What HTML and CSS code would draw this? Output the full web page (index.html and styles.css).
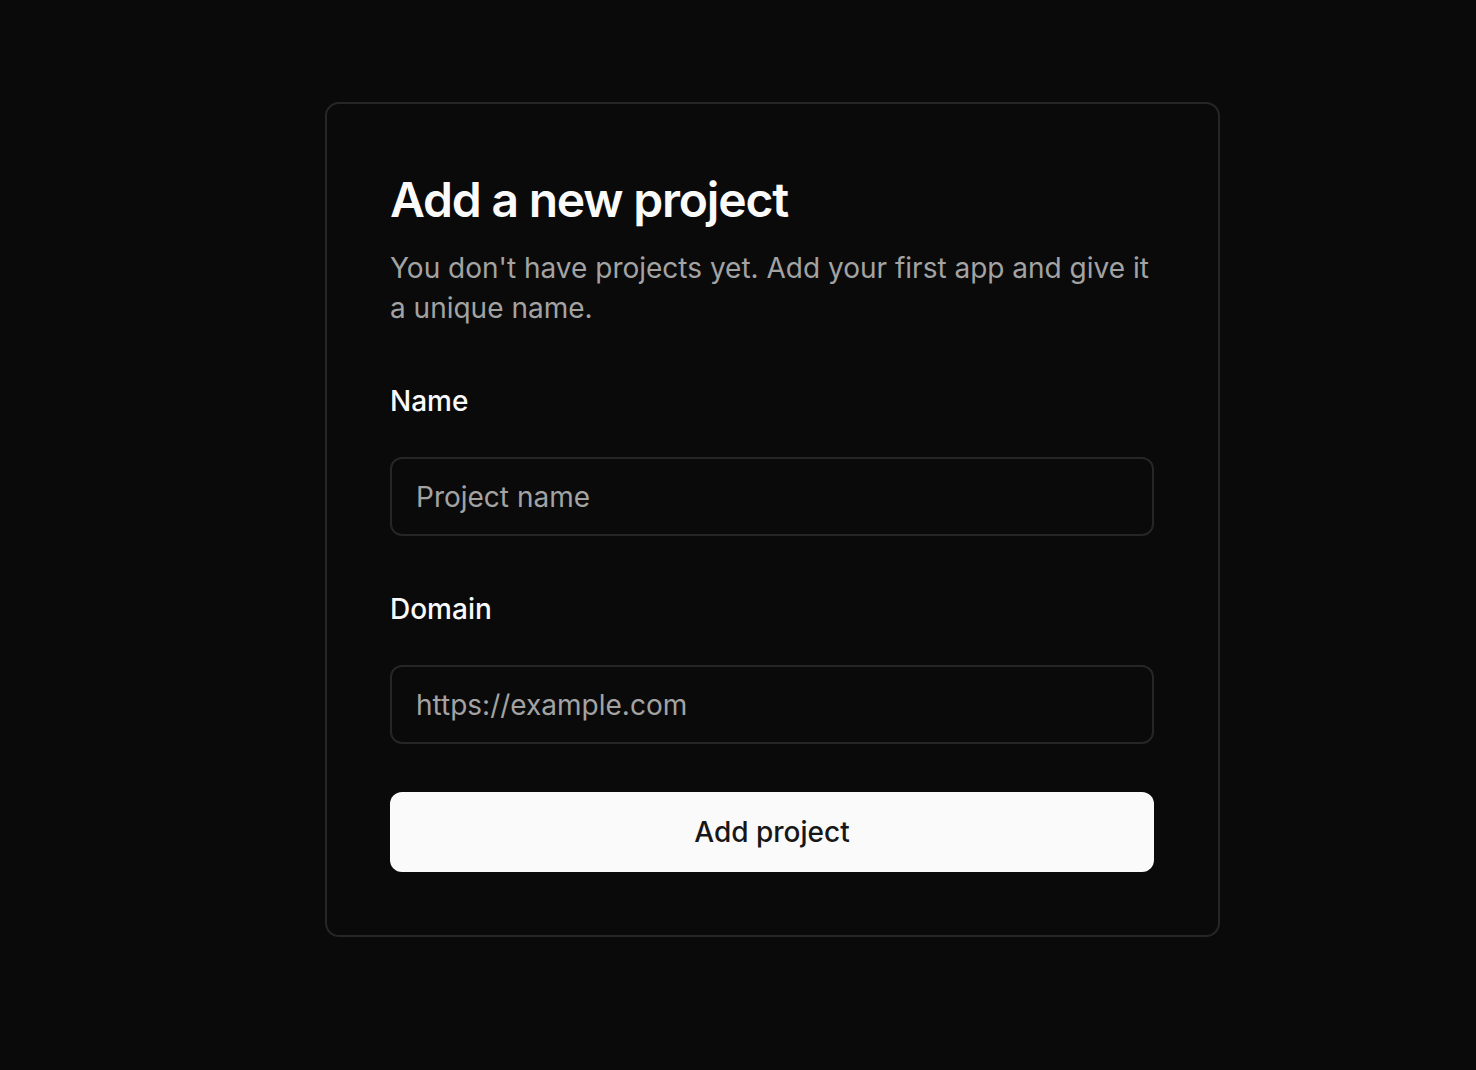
FILE: index.html
```html
<!DOCTYPE html>
<html lang="en">
<head>
<meta charset="utf-8">
<title>Add a new project</title>
<link rel="stylesheet" href="styles.css">
</head>
<body>
  <main class="card">
    <h1 class="title">Add a new project</h1>
    <p class="desc">You don't have projects yet. Add your first app and give it a unique name.</p>
    <form class="form">
      <div class="field">
        <label class="label" for="name">Name</label>
        <input class="input" id="name" type="text" placeholder="Project name">
      </div>
      <div class="field">
        <label class="label" for="domain">Domain</label>
        <input class="input" id="domain" type="text" placeholder="https://example.com">
      </div>
      <button class="button" type="button">Add project</button>
    </form>
  </main>
</body>
</html>
```

FILE: styles.css
```css
* { box-sizing: border-box; }

html, body {
  margin: 0;
  background: #0a0a0a;
}

body {
  padding: 102px 0 0 325px;
  font-family: Inter, "Noto Sans", sans-serif;
  color: #fafafa;
  min-height: 1070px;
}

.card {
  width: 895px;
  border: 2px solid #262626;
  border-radius: 14px;
  padding: 64px 64px 63px 63px;
  background: #0a0a0a;
}

.title {
  margin: 0;
  font-size: 48px;
  line-height: 64px;
  font-weight: 600;
  letter-spacing: -0.025em;
  color: #fafafa;
}

.desc {
  margin: 16px 0 0;
  font-size: 28px;
  line-height: 40px;
  color: #a3a3a3;
}

.form {
  margin-top: 59px;
  display: flex;
  flex-direction: column;
}

.field {
  display: flex;
  flex-direction: column;
  gap: 42px;
  margin-bottom: 59px;
}

.field + .field { margin-bottom: 48px; }

.label {
  font-size: 28px;
  line-height: 28px;
  font-weight: 500;
  color: #fafafa;
}

.input {
  height: 79px;
  width: 100%;
  border: 2px solid #262626;
  border-radius: 12px;
  background: #0a0a0a;
  padding: 0 24px;
  font-family: inherit;
  font-size: 28px;
  color: #fafafa;
  outline: none;
}

.input::placeholder { color: #a3a3a3; }

.button {
  height: 80px;
  width: 100%;
  border: none;
  border-radius: 12px;
  background: #fafafa;
  color: #171717;
  font-family: inherit;
  font-size: 28px;
  font-weight: 500;
  cursor: pointer;
}
```
